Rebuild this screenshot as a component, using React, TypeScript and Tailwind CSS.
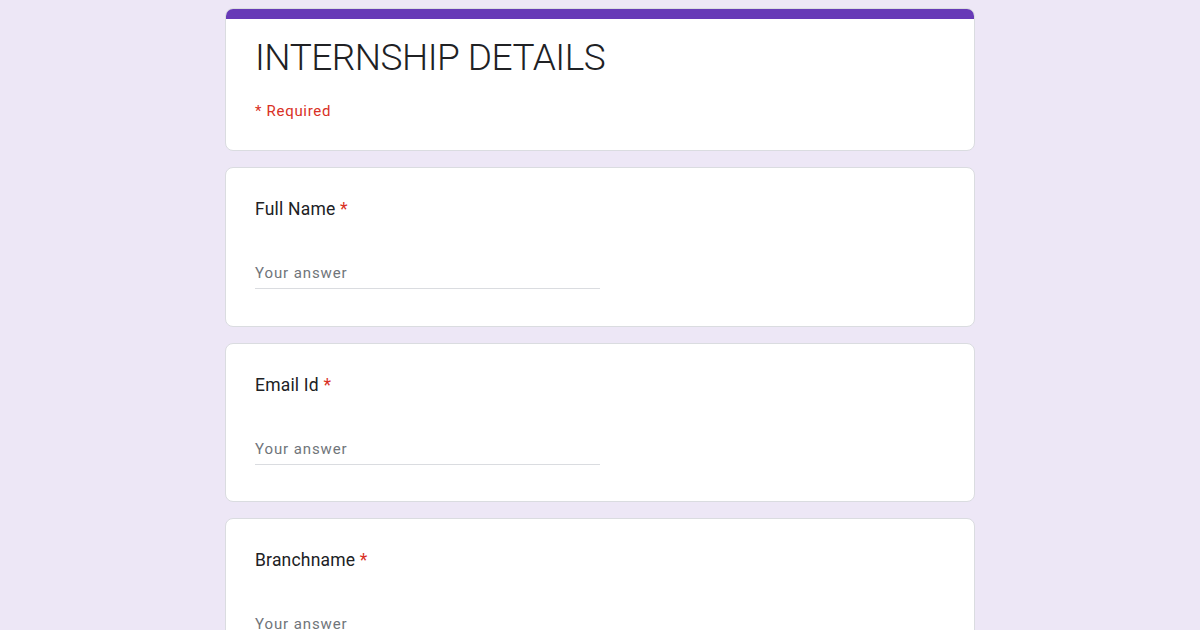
import React from 'react';

const fields = ['Full Name', 'Email Id', 'Branchname'];

const QuestionCard: React.FC<{ label: string }> = ({ label }) => (
  <div className="bg-white border border-[#dadce0] rounded-lg pl-[29px] pr-6 pt-[29px] pb-[36.5px]">
    <div className="text-[17.5px] leading-6 text-[#202124] tracking-[0.2px]">
      {label}
      <span className="text-[#d93025]"> *</span>
    </div>
    <div className="mt-[42px] w-[345px] border-b border-[#dadce0] pb-[5px]">
      <div className="text-[15px] leading-5 text-[#70757a] tracking-[0.9px]">Your answer</div>
    </div>
  </div>
);

export default function App() {
  return (
    <div className="w-full bg-[#ede7f6] font-['Roboto','Liberation_Sans',sans-serif] overflow-hidden h-[630px]">
      <div className="w-[750px] mx-auto pt-2 flex flex-col gap-4">
        {/* Header card */}
        <div className="bg-white border border-[#dadce0] rounded-lg overflow-hidden">
          <div className="h-[11px] bg-[#673ab7] -mx-px -mt-px" />
          <div className="pl-[29px] pr-6 pt-[17px] pb-[29px]">
            <h1 className="text-[37px] leading-[44px] text-[#202124] font-light tracking-[-0.5px]">INTERNSHIP DETAILS</h1>
            <p className="mt-[21px] text-[15px] leading-5 text-[#d93025] tracking-[0.7px]">* Required</p>
          </div>
        </div>

        {fields.map((f) => (
          <QuestionCard key={f} label={f} />
        ))}
      </div>
    </div>
  );
}
